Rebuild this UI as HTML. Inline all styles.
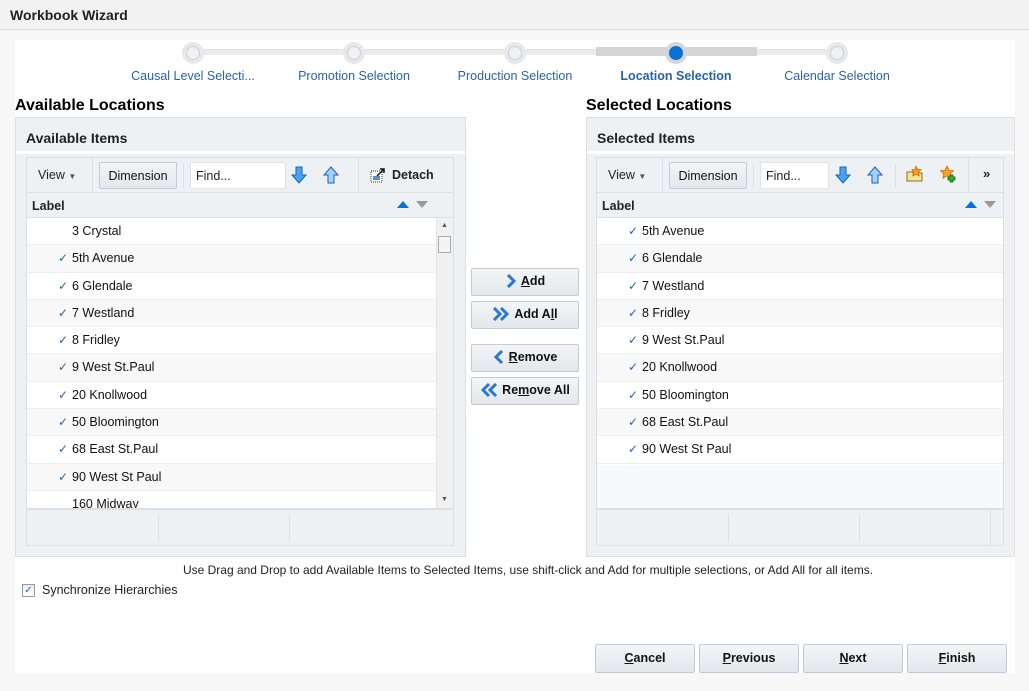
<!DOCTYPE html>
<html><head><meta charset="utf-8"><style>
*{box-sizing:border-box;margin:0;padding:0}
body{width:1029px;height:691px;background:#f7f7f7;font-family:"Liberation Sans",Arial,sans-serif;font-size:12px;color:#222;position:relative;overflow:hidden}
.a{position:absolute}
.hdr{left:0;top:0;width:1029px;height:30px;background:#f2f2f2;border-bottom:1px solid #d6dbe0}
.hdr span{position:absolute;left:10px;top:7px;font-weight:bold;font-size:14px;color:#222}
.main{left:15px;top:40px;width:1000px;height:633px;background:#fff}
.circ{width:22px;height:22px;border-radius:50%;background:#e8e8e8;}
.circ i{position:absolute;left:4px;top:4px;width:14px;height:14px;border-radius:50%;background:#eef1f5;border:1px solid #c8d0da}
.lbl{color:#2b62a6;font-size:12.5px;text-align:center;width:160px}
.h2{font-weight:bold;font-size:16px;color:#000}
.panel{background:#eef1f4;border:1px solid #d9dfe3}
.ph{font-weight:bold;font-size:14px;color:#222}
.tbl{background:#fff;border:1px solid #d9dfe3}
.tb{background:#eef1f4;border-bottom:1px solid #d9dfe3}
.btn{border:1px solid #c4cbd2;border-radius:2px;background:linear-gradient(#f3f5f7,#e3e7eb);text-align:center;font-size:12.5px;color:#111;line-height:26px}
.find{background:#fff;border:1px solid #e0e4e8;padding:6px 5px;font-size:12.5px;color:#222}
.row{height:27.3px;line-height:27px;border-bottom:1px solid #eceff2;font-size:12.5px;color:#111;white-space:nowrap}
.row:nth-child(even){background:#f8f8f8}
.ck{color:#2b62a6;font-size:12px;display:inline-block;width:14px}
.sep{width:1px;background:#d9dfe3}
.foot{background:#eef1f4;border-top:2px solid #d9dfe3}
u{text-decoration:underline}
.mv{border:1px solid #c4cbd2;border-radius:2px;background:linear-gradient(#f3f5f7,#e3e7eb);font-weight:bold;font-size:12.5px;line-height:25px;text-align:center;color:#111}
.mv svg{vertical-align:-3px;margin-right:4px}
</style></head><body>
<div class="a hdr"><span>Workbook Wizard</span></div>
<div class="a main"></div>

<div class="a" style="left:193px;top:49px;width:644px;height:6px;background:#ececec;border-top:1px solid #e0e0e0"></div>
<div class="a" style="left:596px;top:47px;width:161px;height:9px;background:#d5d5d5"></div>
<div class="a circ" style="left:182px;top:42px"><i></i></div>
<div class="a circ" style="left:343px;top:42px"><i></i></div>
<div class="a circ" style="left:504px;top:42px"><i></i></div>
<div class="a circ" style="left:665px;top:42px;background:#d5d5d5"><i style="background:#0a72d4;border-color:#0a72d4"></i></div>
<div class="a circ" style="left:826px;top:42px"><i></i></div>
<div class="a lbl" style="left:113px;top:69px">Causal Level Selecti...</div>
<div class="a lbl" style="left:274px;top:69px">Promotion Selection</div>
<div class="a lbl" style="left:435px;top:69px">Production Selection</div>
<div class="a lbl" style="left:596px;top:69px;font-weight:bold">Location Selection</div>
<div class="a lbl" style="left:757px;top:69px">Calendar Selection</div>

<div class="a h2" style="left:15px;top:97px">Available Locations</div>
<div class="a h2" style="left:586px;top:97px">Selected Locations</div>

<div class="a panel" style="left:15px;top:117px;width:451px;height:440px"></div>
<div class="a ph" style="left:26px;top:130px">Available Items</div>
<div class="a" style="left:16px;top:151px;width:449px;height:3px;background:#fff"></div>
<div class="a tbl" style="left:26px;top:157px;width:428px;height:389px"></div>
<div class="a tb" style="left:27px;top:158px;width:426px;height:35px"></div>
<div class="a" style="left:38px;top:168px;font-size:12.5px">View <span style="font-size:8px;color:#555">▼</span></div>
<div class="a sep" style="left:92px;top:158px;height:35px"></div>
<div class="a btn" style="left:99px;top:162px;width:78px;height:27px">Dimension</div>
<div class="a sep" style="left:183px;top:164px;height:24px"></div>
<div class="a find" style="left:190px;top:162px;width:96px;height:27px">Find...</div>
<svg class="a" style="left:291px;top:166px" width="16" height="18" viewBox="0 0 16 18"><path d="M5 1h6v8h4l-7 8-7-8h4z" fill="#4aa3f0" stroke="#1d5fb0"/></svg>
<svg class="a" style="left:323px;top:166px" width="16" height="18" viewBox="0 0 16 18"><path d="M5 17h6V9h4L8 1 1 9h4z" fill="#9fd2fb" stroke="#1d5fb0"/></svg>
<div class="a sep" style="left:358px;top:158px;height:35px"></div>
<svg class="a" style="left:370px;top:167px" width="16" height="16" viewBox="0 0 16 16"><rect x="1" y="4" width="11" height="11" fill="#fff" stroke="#333" stroke-dasharray="1 1"/><rect x="3" y="9" width="7" height="4" fill="#5b8fd0"/><path d="M7 9l7-7M10 2h4v4" stroke="#111" stroke-width="1.5" fill="none"/></svg>
<div class="a" style="left:392px;top:168px;font-weight:bold;font-size:12.5px">Detach</div>
<div class="a" style="left:27px;top:193px;width:426px;height:25px;background:#eef1f4;border-bottom:1px solid #d9dfe3"></div>
<div class="a" style="left:32px;top:199px;font-weight:bold;font-size:12.5px">Label</div>
<svg class="a" style="left:397px;top:200px" width="34" height="9"><path d="M0 8l6-7 6 7z" fill="#0a72d4"/><path d="M19 1h12l-6 7z" fill="#999"/></svg>
<div class="a" style="left:27px;top:218px;width:409px;height:291px;overflow:hidden">
<div class="row" style="padding-left:45px">3 Crystal</div>
<div class="row" style="padding-left:31px"><span class="ck">✓</span>5th Avenue</div>
<div class="row" style="padding-left:31px"><span class="ck">✓</span>6 Glendale</div>
<div class="row" style="padding-left:31px"><span class="ck">✓</span>7 Westland</div>
<div class="row" style="padding-left:31px"><span class="ck">✓</span>8 Fridley</div>
<div class="row" style="padding-left:31px"><span class="ck">✓</span>9 West St.Paul</div>
<div class="row" style="padding-left:31px"><span class="ck">✓</span>20 Knollwood</div>
<div class="row" style="padding-left:31px"><span class="ck">✓</span>50 Bloomington</div>
<div class="row" style="padding-left:31px"><span class="ck">✓</span>68 East St.Paul</div>
<div class="row" style="padding-left:31px"><span class="ck">✓</span>90 West St Paul</div>
<div class="row" style="padding-left:45px">160 Midway</div>
</div>
<div class="a" style="left:436px;top:218px;width:17px;height:291px;background:#f0f0f0;border-left:1px solid #e4e4e4"></div>
<div class="a" style="left:441px;top:222px;font-size:7px;color:#555">▲</div>
<div class="a" style="left:438px;top:236px;width:13px;height:17px;background:#f4f4f4;border:1px solid #aaa"></div>
<div class="a" style="left:441px;top:496px;font-size:7px;color:#555">▼</div>
<div class="a foot" style="left:27px;top:508px;width:426px;height:37px"></div>
<div class="a sep" style="left:158px;top:514px;height:28px"></div>
<div class="a sep" style="left:289px;top:514px;height:28px"></div>

<div class="a mv" style="left:471px;top:268px;width:108px;height:28px"><svg width="12" height="14"><path d="M3 1l6 6-6 6" stroke="#2a79d0" stroke-width="3" fill="none"/></svg><u>A</u>dd</div>
<div class="a mv" style="left:471px;top:301px;width:108px;height:28px"><svg width="18" height="14"><path d="M2 1l6 6-6 6M9 1l6 6-6 6" stroke="#2a79d0" stroke-width="3" fill="none"/></svg>Add A<u>l</u>l</div>
<div class="a mv" style="left:471px;top:344px;width:108px;height:28px"><svg width="12" height="14"><path d="M9 1L3 7l6 6" stroke="#2a79d0" stroke-width="3" fill="none"/></svg><u>R</u>emove</div>
<div class="a mv" style="left:471px;top:377px;width:108px;height:28px"><svg width="18" height="14"><path d="M16 1l-6 6 6 6M9 1L3 7l6 6" stroke="#2a79d0" stroke-width="3" fill="none"/></svg>Re<u>m</u>ove All</div>

<div class="a panel" style="left:586px;top:117px;width:429px;height:440px"></div>
<div class="a ph" style="left:597px;top:130px">Selected Items</div>
<div class="a" style="left:587px;top:151px;width:427px;height:3px;background:#fff"></div>
<div class="a tbl" style="left:596px;top:157px;width:408px;height:389px;background:#f8f9fb"></div>
<div class="a tb" style="left:597px;top:158px;width:406px;height:35px"></div>
<div class="a" style="left:608px;top:168px;font-size:12.5px">View <span style="font-size:8px;color:#555">▼</span></div>
<div class="a sep" style="left:662px;top:158px;height:35px"></div>
<div class="a btn" style="left:669px;top:162px;width:78px;height:27px">Dimension</div>
<div class="a sep" style="left:753px;top:164px;height:24px"></div>
<div class="a find" style="left:760px;top:162px;width:69px;height:27px">Find...</div>
<svg class="a" style="left:835px;top:166px" width="16" height="18" viewBox="0 0 16 18"><path d="M5 1h6v8h4l-7 8-7-8h4z" fill="#4aa3f0" stroke="#1d5fb0"/></svg>
<svg class="a" style="left:867px;top:166px" width="16" height="18" viewBox="0 0 16 18"><path d="M5 17h6V9h4L8 1 1 9h4z" fill="#9fd2fb" stroke="#1d5fb0"/></svg>
<div class="a sep" style="left:895px;top:164px;height:24px"></div>
<svg class="a" style="left:906px;top:165px" width="18" height="18" viewBox="0 0 18 18"><path d="M1 7h5l1 1h9v8H1z" fill="#f3e29a" stroke="#8a7420"/><path d="M10 1l1.6 3.4 3.6.4-2.7 2.5.7 3.6-3.2-1.8-3.2 1.8.7-3.6L5.8 4.8l3.6-.4z" fill="#f7a21b" stroke="#c65d00" stroke-width=".7"/></svg>
<svg class="a" style="left:939px;top:165px" width="18" height="18" viewBox="0 0 18 18"><path d="M8 1l2 4.2 4.5.5-3.3 3 .9 4.5L8 11l-4.1 2.2.9-4.5-3.3-3 4.5-.5z" fill="#f7a21b" stroke="#c65d00" stroke-width=".7"/><path d="M11 10h3v2h2v3h-2v2h-3v-2H9v-3h2z" fill="#2ab02a" stroke="#0b5d0b" stroke-width=".7"/></svg>
<div class="a sep" style="left:968px;top:158px;height:35px"></div>
<div class="a" style="left:983px;top:166px;font-weight:bold;font-size:13px">»</div>
<div class="a" style="left:597px;top:193px;width:406px;height:25px;background:#eef1f4;border-bottom:1px solid #d9dfe3"></div>
<div class="a" style="left:602px;top:199px;font-weight:bold;font-size:12.5px">Label</div>
<svg class="a" style="left:965px;top:200px" width="34" height="9"><path d="M0 8l6-7 6 7z" fill="#0a72d4"/><path d="M19 1h12l-6 7z" fill="#999"/></svg>
<div class="a" style="left:597px;top:218px;width:406px;height:248px;overflow:hidden;background:#fff">
<div class="row" style="padding-left:31px"><span class="ck">✓</span>5th Avenue</div>
<div class="row" style="padding-left:31px"><span class="ck">✓</span>6 Glendale</div>
<div class="row" style="padding-left:31px"><span class="ck">✓</span>7 Westland</div>
<div class="row" style="padding-left:31px"><span class="ck">✓</span>8 Fridley</div>
<div class="row" style="padding-left:31px"><span class="ck">✓</span>9 West St.Paul</div>
<div class="row" style="padding-left:31px"><span class="ck">✓</span>20 Knollwood</div>
<div class="row" style="padding-left:31px"><span class="ck">✓</span>50 Bloomington</div>
<div class="row" style="padding-left:31px"><span class="ck">✓</span>68 East St.Paul</div>
<div class="row" style="padding-left:31px;background:#fff"><span class="ck">✓</span>90 West St Paul</div>
</div>
<div class="a" style="left:597px;top:465px;width:406px;height:45px;background:#f8f9fb"></div>
<div class="a foot" style="left:597px;top:508px;width:406px;height:37px"></div>
<div class="a sep" style="left:728px;top:514px;height:28px"></div>
<div class="a sep" style="left:859px;top:514px;height:28px"></div>
<div class="a sep" style="left:990px;top:510px;height:35px"></div>

<div class="a" style="left:0;top:563px;width:1056px;text-align:center;font-size:12px;color:#222">Use Drag and Drop to add Available Items to Selected Items, use shift-click and Add for multiple selections, or Add All for all items.</div>
<div class="a" style="left:22px;top:584px;width:13px;height:13px;border:1px solid #8b9bb0;background:linear-gradient(#e8ecf2,#fff);font-size:10px;line-height:11px;text-align:center;color:#3a5fa0">✓</div>
<div class="a" style="left:42px;top:583px;font-size:12.5px">Synchronize Hierarchies</div>

<div class="a btn" style="left:595px;top:644px;width:100px;height:29px;font-weight:bold"><u>C</u>ancel</div>
<div class="a btn" style="left:699px;top:644px;width:100px;height:29px;font-weight:bold"><u>P</u>revious</div>
<div class="a btn" style="left:803px;top:644px;width:100px;height:29px;font-weight:bold"><u>N</u>ext</div>
<div class="a btn" style="left:907px;top:644px;width:100px;height:29px;font-weight:bold"><u>F</u>inish</div>
</body></html>
